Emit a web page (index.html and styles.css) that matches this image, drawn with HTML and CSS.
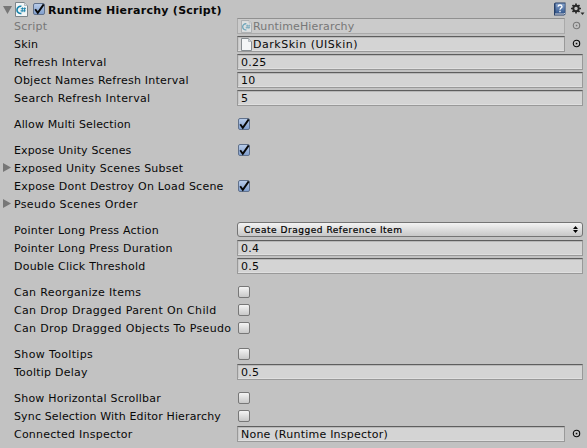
FILE: index.html
```html
<!DOCTYPE html>
<html lang="en">
<head>
<meta charset="utf-8">
<title>Runtime Hierarchy</title>
<link rel="stylesheet" href="styles.css">
</head>
<body>
<svg class="defs" width="0" height="0">
  <defs>
    <linearGradient id="book" x1="0" y1="0" x2="0" y2="1"><stop offset="0" stop-color="#87a3cc"/><stop offset="1" stop-color="#34588f"/></linearGradient>
    <symbol id="check" viewBox="0 0 14 14"><path d="M3.2 7.2 5.8 10.8 11.7 2.4" fill="none" stroke="#080808" stroke-width="1.9"/></symbol>
    <symbol id="pick" viewBox="0 0 9 9"><circle cx="4.5" cy="4.5" r="3.2" fill="none" stroke="currentColor" stroke-width="1.1"/><rect x="3.8" y="3.8" width="1.5" height="1.5" fill="currentColor"/></symbol>
    <symbol id="page" viewBox="0 0 11 13"><path d="M.5.5h7l3 3v9H.5z" fill="#f4f6f7" stroke="#858b8f"/><path d="M7.5.5v3h3" fill="#cbd4da" stroke="#a1a8ad" stroke-width=".7"/></symbol>
    <symbol id="cs" viewBox="0 0 13 15"><path d="M.5.5h9l3 3v11H.5z" fill="#f2f5f6" stroke="#7c858a"/><path d="M9.5.5v3h3" fill="#d5dce0" stroke="#9ca5aa" stroke-width=".7"/><path d="M6.4 4.4A3.6 3.6 0 1 0 6.4 11.4" fill="none" stroke="#1682aa" stroke-width="1.6"/><path d="M7.6 5.3 7 10.2M9.8 5.3 9.2 10.2M5.8 6.7h5.2M5.5 8.8h5.2" fill="none" stroke="#1682aa" stroke-width=".9"/></symbol>
  </defs>
</svg>
<main class="inspector">
  <header class="head">
    <svg class="fold" viewBox="0 0 9 8"><path d="M0 0h9L4.5 8z" fill="#777"/></svg>
    <svg class="script-icon"><use href="#cs"/></svg>
    <span class="box on"><svg><use href="#check"/></svg></span>
    <h1>Runtime Hierarchy (Script)</h1>
    <svg class="help" viewBox="0 0 13 14"><path d="M1 1.5 2.5.5h10v11.8l-1.5 1.2H1z" fill="#263f68"/><path d="M2.5 1.5h9.3v9.8H2.5z" fill="url(#book)"/><path d="M2 12h9l1.2-.8" fill="none" stroke="#dde3ed"/><path d="M5 4.7Q5.2 3 7 3T9 4.7Q9 5.6 7.8 6.2 7 6.7 7 7.8M7 8.8v1.4" fill="none" stroke="#fff" stroke-width="1.3"/></svg>
    <svg class="gear" viewBox="0 0 14 13"><circle cx="5" cy="5.5" r="2.7" fill="none" stroke="#292929" stroke-width="1.9"/><path d="M5 .5v2M5 8.5v2M0 5.5h2M8 5.5h2M1.5 2l1.4 1.4M7.1 7.6 8.5 9M8.5 2 7.1 3.4M2.9 7.6 1.5 9" stroke="#292929" stroke-width="1.7"/><path d="M9.5 9.5h4L11.5 12z" fill="#292929"/></svg>
  </header>
  <section>
    <div class="row disabled"><label>Script</label><div class="field object"><svg class="asset"><use href="#cs"/></svg><span class="tight">RuntimeHierarchy</span></div><svg class="pick"><use href="#pick"/></svg></div>
    <div class="row"><label>Skin</label><div class="field object"><svg class="asset"><use href="#page"/></svg><span class="wide">DarkSkin (UISkin)</span></div><svg class="pick"><use href="#pick"/></svg></div>
    <div class="row"><label class="loose">Refresh Interval</label><div class="field">0.25</div></div>
    <div class="row"><label>Object Names Refresh Interval</label><div class="field">10</div></div>
    <div class="row"><label class="loose">Search Refresh Interval</label><div class="field">5</div></div>
  </section>
  <section>
    <div class="row"><label class="tight">Allow Multi Selection</label><span class="box on"><svg><use href="#check"/></svg></span></div>
  </section>
  <section>
    <div class="row"><label class="tight">Expose Unity Scenes</label><span class="box on"><svg><use href="#check"/></svg></span></div>
    <div class="row foldout"><svg class="arrow" viewBox="0 0 8 9"><path d="M0 0 8 4.5 0 9z" fill="#777"/></svg><label>Exposed Unity Scenes Subset</label></div>
    <div class="row"><label>Expose Dont Destroy On Load Scene</label><span class="box on"><svg><use href="#check"/></svg></span></div>
    <div class="row foldout"><svg class="arrow" viewBox="0 0 8 9"><path d="M0 0 8 4.5 0 9z" fill="#777"/></svg><label class="loose">Pseudo Scenes Order</label></div>
  </section>
  <section>
    <div class="row"><label>Pointer Long Press Action</label><div class="popup"><span>Create Dragged Reference Item</span><svg viewBox="0 0 5 7"><path d="M0 3 2.5 0 5 3zM0 4h5L2.5 7z"/></svg></div></div>
    <div class="row"><label>Pointer Long Press Duration</label><div class="field">0.4</div></div>
    <div class="row"><label>Double Click Threshold</label><div class="field">0.5</div></div>
  </section>
  <section>
    <div class="row"><label class="loose">Can Reorganize Items</label><span class="box"></span></div>
    <div class="row"><label class="loose">Can Drop Dragged Parent On Child</label><span class="box"></span></div>
    <div class="row"><label class="loose">Can Drop Dragged Objects To Pseudo</label><span class="box"></span></div>
  </section>
  <section>
    <div class="row"><label class="loose">Show Tooltips</label><span class="box"></span></div>
    <div class="row"><label>Tooltip Delay</label><div class="field">0.5</div></div>
  </section>
  <section>
    <div class="row"><label>Show Horizontal Scrollbar</label><span class="box"></span></div>
    <div class="row"><label class="tight">Sync Selection With Editor Hierarchy</label><span class="box"></span></div>
    <div class="row"><label>Connected Inspector</label><div class="field object"><span>None (Runtime Inspector)</span></div><svg class="pick"><use href="#pick"/></svg></div>
  </section>
</main>
</body>
</html>
```
FILE: styles.css
```css
* { box-sizing: border-box; }
body { margin: 0; background: #c2c2c2; color: #080808; font: 11px/16px "DejaVu Sans", Verdana, sans-serif; letter-spacing: .23px; }
svg { display: block; flex: none; }
.defs { position: absolute; }
.inspector { width: 587px; height: 448px; overflow: hidden; }
.head { display: flex; height: 18px; padding: 2px 2px 0 3px; }
.head h1 { margin: 0 auto 0 3px; font-size: 11px; line-height: 18px; letter-spacing: .27px; white-space: nowrap; }
.fold { width: 9px; height: 8px; margin: 4px 3px 0 0; }
.script-icon { width: 13px; height: 15px; margin-right: 4px; }
.head .box { margin-top: 1px; }
.help { width: 13px; height: 14px; margin-right: 5px; }
.gear { width: 14px; height: 13px; margin-top: 1px; }
section { display: flex; flex-direction: column; gap: 2px; margin-bottom: 10px; }
.row { display: grid; grid-template-columns: 223px 346px; height: 16px; padding-left: 14px; }
.row:has(.object) { grid-template-columns: 223px 328px 18px; }
.row label { line-height: 18px; white-space: nowrap; }
.tight { letter-spacing: .14px; }
.loose { letter-spacing: .35px; }
.wide { letter-spacing: .52px; }
.row.foldout { grid-template-columns: 11px auto; padding-left: 3px; }
.arrow { width: 8px; height: 9px; margin-top: 3px; }
.field { display: flex; height: 16px; padding-left: 3px; line-height: 15px; white-space: nowrap; background: #d4d4d4; border: 1px solid #999; border-top-color: #5e5e5e; box-shadow: inset 0 1px #b8b8b8, inset 0 -1px #dfdfdf, inset 1px 0 #c8c8c8; }
.asset { width: 11px; height: 13px; margin: 1px 1px 0 0; }
.pick { width: 9px; height: 9px; margin: 3px 0 0 7px; }
.disabled { color: #777; }
.disabled .field { background: #cbcbcb; border-color: #aaa; border-top-color: #909090; box-shadow: none; }
.disabled .asset { opacity: .5; }
.box { width: 12px; height: 12px; margin: 2px 0 0 1px; border: 1px solid #777; border-radius: 2px; background: linear-gradient(#f4f4f4, #c8c8c8); }
.box.on { background: linear-gradient(#b7cbe9, #819fcd); border-color: #60718c; }
.box svg { width: 14px; height: 14px; margin: -2px; }
.popup { display: flex; justify-content: space-between; height: 15px; padding: 0 4px 0 6px; border: 1px solid #747474; border-radius: 3px; background: linear-gradient(#f3f3f3, #c7c7c7); color: #000; font-size: 9px; line-height: 14px; letter-spacing: .53px; -webkit-text-stroke: .2px #000; }
.popup svg { width: 5px; height: 7px; margin-top: 3px; }
```
